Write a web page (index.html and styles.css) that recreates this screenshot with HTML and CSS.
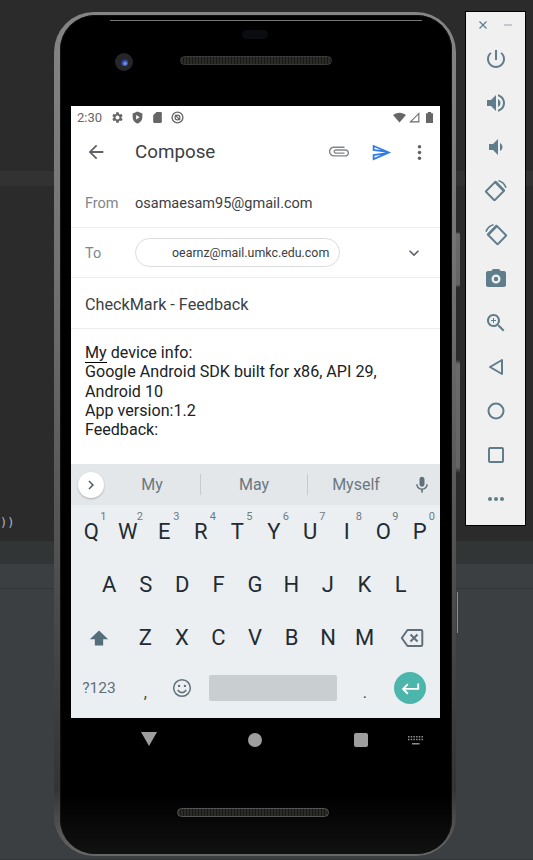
FILE: index.html
```html
<!DOCTYPE html>
<html lang="en">

<head>
  <meta charset="UTF-8" />
  <meta name="viewport" content="width=device-width, initial-scale=1.0" />
  <title>Compose - Emulator</title>
  <link rel="stylesheet" href="styles.css">
</head>

<body>
  <div class="desktop">
    <div class="ide-top">
      <div class="ide-band"></div>
      <div class="ide-code">))</div>
    </div>
    <div class="ide-tabs"></div>
    <div class="ide-toolbar"></div>
    <div class="ide-bottom"></div>

    <div class="side-button side-button-power"></div>
    <div class="side-button side-button-volume"></div>
    <div class="side-tick"></div>

    <div class="phone">
      <div class="phone-inner">
        <div class="bezel-top">
          <div class="highlight"></div>
          <div class="sensor"></div>
          <div class="camera"><div class="lens"></div></div>
          <div class="speaker speaker-top"></div>
        </div>

        <div class="screen">
          <div class="status">
            <span class="time">2:30</span>
            <svg class="st" viewBox="0 0 24 24"><path d="M19.14 12.94c.04-.3.06-.61.06-.94 0-.32-.02-.64-.07-.94l2.03-1.58c.18-.14.23-.41.12-.61l-1.92-3.32c-.12-.22-.37-.29-.59-.22l-2.39.96c-.5-.38-1.03-.7-1.62-.94l-.36-2.54c-.04-.24-.24-.41-.48-.41h-3.84c-.24 0-.43.17-.47.41l-.36 2.54c-.59.24-1.13.57-1.62.94l-2.39-.96c-.22-.08-.47 0-.59.22L2.74 8.87c-.12.21-.08.47.12.61l2.03 1.58c-.05.3-.09.63-.09.94s.02.64.07.94l-2.03 1.58c-.18.14-.23.41-.12.61l1.92 3.32c.12.22.37.29.59.22l2.39-.96c.5.38 1.03.7 1.62.94l.36 2.54c.05.24.24.41.48.41h3.84c.24 0 .44-.17.47-.41l.36-2.54c.59-.24 1.13-.56 1.62-.94l2.39.96c.22.08.47 0 .59-.22l1.92-3.32c.12-.22.07-.47-.12-.61l-2.01-1.58zM12 15.6c-1.98 0-3.6-1.62-3.6-3.6s1.62-3.6 3.6-3.6 3.6 1.62 3.6 3.6-1.62 3.6-3.6 3.6z"/></svg>
            <svg class="st" viewBox="0 0 24 24"><path fill-rule="evenodd" d="M12 1L3 4.5V11c0 5.5 3.8 10.7 9 12 5.200-1.300 9-6.500 9-12V4.500L12 1zM9.500 7.500v8l6.500-4-6.500-4z"/></svg>
            <svg class="st" viewBox="0 0 24 24"><path d="M18 2h-8L4 8v12c0 1.100.9 2 2 2h12c1.100 0 2-.9 2-2V4c0-1.100-.9-2-2-2z"/></svg>
            <svg class="st" viewBox="0 0 24 24"><circle cx="12" cy="12" r="10" fill="none" stroke="#666" stroke-width="2.400"/><circle cx="12" cy="12" r="4.500" fill="none" stroke="#666" stroke-width="2.200"/><path fill="none" stroke="#666" stroke-width="2.200" d="M7.500 7l9.500 10"/></svg>
            <span class="status-space"></span>
            <svg class="st" viewBox="0 0 24 24"><path d="M12 21L0 7.500C3.200 4.700 7.400 3 12 3s8.800 1.700 12 4.500L12 21z"/></svg>
            <svg class="st st-signal" viewBox="0 0 24 24"><path fill="none" stroke="#666" stroke-width="2" d="M20 4.500V20H4.500L20 4.500z"/></svg>
            <svg class="st" viewBox="0 0 24 24"><path d="M9 2h6v2h2.500c.6 0 1 .4 1 1v16c0 .6-.4 1-1 1h-11c-.6 0-1-.4-1-1V5c0-.6.4-1 1-1H9V2z"/></svg>
          </div>

          <div class="toolbar">
            <svg class="back" viewBox="0 0 24 24"><path d="M20 11H7.830l5.590-5.590L12 4l-8 8 8 8 1.410-1.410L7.830 13H20v-2z"/></svg>
            <span class="title">Compose</span>
            <svg class="attach" viewBox="0 0 24 24"><path d="M18 7.500H6.500c-2.210 0-4 1.790-4 4s1.790 4 4 4H19c1.380 0 2.500-1.120 2.500-2.500s-1.120-2.500-2.500-2.500H8.500c-.55 0-1 .45-1 1s.45 1 1 1H18V14H8.500C7.120 14 6 12.880 6 11.500S7.120 9 8.500 9H19c2.210 0 4 1.790 4 4s-1.790 4-4 4H6.500C3.460 17 1 14.540 1 11.500S3.460 6 6.500 6H18v1.500z"/></svg>
            <svg class="send" viewBox="0 0 24 24"><path d="M4.010 6.030l7.510 3.220-7.520-1 .01-2.220m7.500 8.720L4 17.970v-2.220l7.510-1M2.010 3L2 10l15 2-15 2 .01 7L23 12 2.010 3z"/></svg>
            <svg class="more" viewBox="0 0 24 24"><circle cx="12" cy="5.500" r="2"/><circle cx="12" cy="12" r="2"/><circle cx="12" cy="18.500" r="2"/></svg>
          </div>

          <div class="row row-from">
            <span class="label">From</span>
            <span class="value">osamaesam95@gmail.com</span>
          </div>
          <div class="row row-to">
            <span class="label">To</span>
            <span class="chip">oearnz@mail.umkc.edu.com</span>
            <svg class="expand" viewBox="0 0 24 24"><path d="M16.590 8.590L12 13.170 7.410 8.590 6 10l6 6 6-6-1.410-1.410z"/></svg>
          </div>
          <div class="row row-subject">CheckMark - Feedback</div>

          <div class="body-text">
            <div><span class="misspelt">My</span> device info:</div>
            <div>Google Android SDK built for x86, API 29,</div>
            <div>Android 10</div>
            <div>App version:1.2</div>
            <div>Feedback:</div>
          </div>

          <div class="suggest">
            <div class="suggest-open"><svg viewBox="0 0 24 24"><path d="M8.590 16.590L13.170 12 8.590 7.410 10 6l6 6-6 6-1.410-1.410z"/></svg></div>
            <span class="word">My</span>
            <span class="word word-mid">May</span>
            <span class="word word-last">Myself</span>
            <svg class="mic" viewBox="0 0 24 24"><path d="M12 14c1.660 0 2.990-1.340 2.990-3L15 5c0-1.660-1.340-3-3-3S9 3.340 9 5v6c0 1.660 1.340 3 3 3zm5.300-3c0 3-2.540 5.100-5.300 5.100S6.700 14 6.700 11H5c0 3.410 2.720 6.230 6 6.720V21h2v-3.280c3.280-.48 6-3.300 6-6.720h-1.700z"/></svg>
          </div>

          <div class="keyboard">
            <div class="keys keys-top">
              <div class="key">Q<sup>1</sup></div>
              <div class="key">W<sup>2</sup></div>
              <div class="key">E<sup>3</sup></div>
              <div class="key">R<sup>4</sup></div>
              <div class="key">T<sup>5</sup></div>
              <div class="key">Y<sup>6</sup></div>
              <div class="key">U<sup>7</sup></div>
              <div class="key">I<sup>8</sup></div>
              <div class="key">O<sup>9</sup></div>
              <div class="key">P<sup>0</sup></div>
            </div>
            <div class="keys keys-mid">
              <div class="key">A</div>
              <div class="key">S</div>
              <div class="key">D</div>
              <div class="key">F</div>
              <div class="key">G</div>
              <div class="key">H</div>
              <div class="key">J</div>
              <div class="key">K</div>
              <div class="key">L</div>
            </div>
            <div class="keys keys-low">
              <div class="key"><svg class="shift" viewBox="0 0 24 24"><path d="M12 3L1 13.500h6V21h10v-7.500h6L12 3z"/></svg></div>
              <div class="key">Z</div>
              <div class="key">X</div>
              <div class="key">C</div>
              <div class="key">V</div>
              <div class="key">B</div>
              <div class="key">N</div>
              <div class="key">M</div>
              <div class="key"><svg class="backspace" viewBox="0 0 24 24"><path fill="none" stroke="#5f707a" stroke-width="2" stroke-linejoin="round" d="M7.500 4H21c.8 0 1.300.5 1.300 1.300v13.400c0 .8-.5 1.300-1.300 1.300H7.500L1.800 12l5.700-8z"/><path fill="none" stroke="#5f707a" stroke-width="2" d="M10.500 8.500l7 7M17.500 8.500l-7 7"/></svg></div>
            </div>
            <div class="keys keys-bottom">
              <div class="key key-small">?123</div>
              <div class="key key-small key-comma">,</div>
              <div class="key"><svg class="smile" viewBox="0 0 24 24"><circle cx="12" cy="12" r="10" fill="none" stroke="#5f707a" stroke-width="1.800"/><circle cx="8.500" cy="9.500" r="1.400" fill="#5f707a"/><circle cx="15.500" cy="9.500" r="1.400" fill="#5f707a"/><path fill="none" stroke="#5f707a" stroke-width="1.800" d="M7 14.200c1 2 2.800 3.200 5 3.200s4-1.200 5-3.200"/></svg></div>
              <div class="key"><div class="space"></div></div>
              <div class="key key-small key-period">.</div>
              <div class="key">
                <div class="enter"><svg viewBox="0 0 24 24"><path d="M20 7v5H6.830l3.580-3.590L9 7l-6 6 6 6 1.410-1.410L6.830 14H22V7h-2z"/></svg></div>
              </div>
            </div>
          </div>
        </div>

        <div class="bezel-bottom">
          <div class="nav">
            <svg class="nav-back" viewBox="0 0 16 14"><path d="M0 0h16L8 14z"/></svg>
            <div class="nav-home"></div>
            <div class="nav-recent"></div>
            <svg class="nav-kb" viewBox="0 0 15 9"><path d="M0 0h1.500v1.500H0zM2.700 0h1.500v1.500H2.700zM5.400 0h1.500v1.500H5.400zM8.100 0h1.500v1.500H8.100zM10.800 0h1.500v1.500h-1.500zM13.500 0H15v1.500h-1.500zM0 2.700h1.500v1.500H0zM2.700 2.700h1.500v1.500H2.700zM5.400 2.700h1.500v1.500H5.400zM8.100 2.700h1.500v1.500H8.100zM10.800 2.700h1.500v1.500h-1.500zM13.500 2.700H15v1.500h-1.500zM4 7h7.500v1.400H4z"/></svg>
          </div>
          <div class="speaker speaker-bottom"></div>
        </div>
      </div>
    </div>

    <div class="panel">
      <div class="panel-top">
        <svg viewBox="0 0 10 10"><path d="M1.500 1.500l7 7M8.500 1.500l-7 7"/></svg>
        <svg viewBox="0 0 10 10"><path d="M1 5h8"/></svg>
      </div>
      <div class="tool"><svg viewBox="0 0 24 24"><path d="M13 3h-2v10h2V3zm4.830 2.170l-1.420 1.420C17.990 7.860 19 9.810 19 12c0 3.870-3.130 7-7 7s-7-3.130-7-7c0-2.190 1.010-4.140 2.580-5.420L6.170 5.170C4.230 6.820 3 9.260 3 12c0 4.970 4.030 9 9 9s9-4.030 9-9c0-2.740-1.230-5.180-3.170-6.830z"/></svg></div>
      <div class="tool"><svg viewBox="0 0 24 24"><path d="M3 9v6h4l5 5V4L7 9H3zm13.500 3c0-1.770-1.020-3.290-2.500-4.030v8.050c1.480-.73 2.500-2.250 2.500-4.020zM14 3.230v2.060c2.890.86 5 3.540 5 6.710s-2.110 5.850-5 6.710v2.060c4.010-.91 7-4.490 7-8.770s-2.990-7.860-7-8.770z"/></svg></div>
      <div class="tool"><svg viewBox="0 0 24 24"><path d="M5 9v6h4l5 5V4L9 9H5zm13.500 3c0-1.770-1.020-3.290-2.500-4.030v8.050c1.480-.73 2.500-2.250 2.500-4.020z"/></svg></div>
      <div class="tool"><svg viewBox="0 0 24 24"><path d="M10.500 2.300L1.300 11.500c-.6.600-.6 1.500 0 2.100l8.100 8.100c.6.600 1.500.6 2.100 0l9.200-9.200c.6-.6.600-1.500 0-2.100l-8.100-8.100c-.6-.6-1.500-.6-2.100 0zm.5 2.300l7.400 7.400-7.900 7.900-7.400-7.400 7.900-7.900zM14.500 1c3.900.8 7 3.700 8.200 7.500l-1.500.4c-1-3.200-3.600-5.700-6.900-6.400L14.500 1z"/></svg></div>
      <div class="tool"><svg viewBox="0 0 24 24"><path d="M13.500 2.300l9.200 9.200c.6.600.6 1.500 0 2.100l-8.100 8.100c-.6.600-1.500.6-2.100 0l-9.200-9.200c-.6-.6-.6-1.500 0-2.100l8.100-8.100c.6-.6 1.500-.6 2.100 0zm-.5 2.300L5.600 12l7.900 7.900 7.400-7.400L13 4.600zM9.500 1C5.600 1.800 2.500 4.700 1.300 8.500l1.500.4c1-3.200 3.600-5.700 6.900-6.400L9.500 1z"/></svg></div>
      <div class="tool"><svg viewBox="0 0 24 24"><path fill-rule="evenodd" d="M9 2L7.170 4H4c-1.100 0-2 .9-2 2v12c0 1.100.9 2 2 2h16c1.100 0 2-.9 2-2V6c0-1.100-.9-2-2-2h-3.170L15 2H9zm3 14.500a4.500 4.500 0 1 1 0-9 4.500 4.500 0 0 1 0 9zm0-2.300a2.200 2.200 0 1 0 0-4.400 2.200 2.200 0 0 0 0 4.400z"/></svg></div>
      <div class="tool"><svg viewBox="0 0 24 24"><path d="M15.500 14h-.79l-.28-.27C15.410 12.590 16 11.110 16 9.500 16 5.910 13.090 3 9.500 3S3 5.910 3 9.500 5.910 16 9.500 16c1.610 0 3.090-.59 4.230-1.570l.27.28v.79l5 4.990L20.490 19l-4.990-5zm-6 0C7.010 14 5 11.990 5 9.500S7.010 5 9.500 5 14 7.010 14 9.500 11.990 14 9.500 14z"/><path d="M9 7h1v2h2v1h-2v2H9v-2H7V9h2z"/></svg></div>
      <div class="tool"><svg viewBox="0 0 24 24"><path fill="none" stroke="#607d8b" stroke-width="2" stroke-linejoin="round" d="M18 5v14L6 12z"/></svg></div>
      <div class="tool"><svg viewBox="0 0 24 24"><circle cx="12" cy="12" r="7.500" fill="none" stroke="#607d8b" stroke-width="2"/></svg></div>
      <div class="tool"><svg viewBox="0 0 24 24"><rect x="5" y="5" width="14" height="14" rx="1" fill="none" stroke="#607d8b" stroke-width="2"/></svg></div>
      <div class="tool"><svg viewBox="0 0 24 24"><circle cx="6" cy="12" r="2"/><circle cx="12" cy="12" r="2"/><circle cx="18" cy="12" r="2"/></svg></div>
    </div>
  </div>
</body>

</html>
```

FILE: styles.css
```css
* {
  box-sizing: border-box;
}

html,
body {
  margin: 0;
  padding: 0;
}

body {
  font-family: Roboto, "Liberation Sans", sans-serif;
}

.desktop {
  position: relative;
  width: 533px;
  height: 860px;
  overflow: hidden;
  display: flex;
  flex-direction: column;
  background-color: #2b2b2b;
}

/* ide behind the emulator */
.ide-top {
  height: 541px;
  padding-top: 171px;
  background-color: #2b2b2b;
  display: flex;
  flex-direction: column;
}

.ide-band {
  height: 15px;
  background-color: #323232;
}

.ide-code {
  margin-top: 329px;
  font-family: "DejaVu Sans Mono", monospace;
  font-size: 12px;
  line-height: 16px;
  color: #a9b7c6;
}

.ide-tabs {
  height: 23px;
  background-color: #313535;
}

.ide-toolbar {
  height: 25px;
  background-color: #3c3f41;
  border-bottom: 1px solid #333637;
}

.ide-bottom {
  flex: 1;
  background-color: #3c3f41;
  border-bottom: 1px solid #333637;
}

/* phone */
.side-button {
  position: absolute;
  left: 456px;
  width: 4px;
  background: linear-gradient(180deg, #333 0, #6a6a6a 4%, #646464 94%, #222 100%);
  border-radius: 0 2px 2px 0;
}

.side-button-power {
  top: 232px;
  height: 56px;
}

.side-button-volume {
  top: 360px;
  height: 114px;
}

.side-tick {
  position: absolute;
  left: 457px;
  top: 592px;
  width: 1px;
  height: 41px;
  background-color: #8a8d8e;
}

.phone {
  position: absolute;
  left: 54px;
  top: 12px;
  width: 402px;
  height: 844px;
  padding: 3px 4px 2px 6px;
  border-radius: 40px;
  background: linear-gradient(180deg, #858585 0%, #727272 30%, #505050 65%, #343434 92%, #686868 100%);
}

.phone-inner {
  height: 100%;
  border-radius: 35px;
  display: flex;
  flex-direction: column;
  align-items: center;
  background: linear-gradient(180deg, #000 0%, #000 93%, #111 100%);
  box-shadow: inset 0 0 0 1px #111;
}

.bezel-top {
  position: relative;
  width: 100%;
  height: 91px;
}

.highlight {
  position: absolute;
  left: 50px;
  right: 30px;
  top: 5px;
  height: 1px;
  background-color: #777;
}

.sensor {
  position: absolute;
  left: 182px;
  top: 15px;
  width: 26px;
  height: 9px;
  border-radius: 5px;
  background-color: #0a0c10;
}

.camera {
  position: absolute;
  left: 55px;
  top: 38px;
  width: 18px;
  height: 18px;
  border-radius: 50%;
  background-color: #24262a;
  display: flex;
  align-items: center;
  justify-content: center;
}

.lens {
  width: 7px;
  height: 7px;
  border-radius: 50%;
  background: radial-gradient(circle at 60% 65%, #8aa8f0 0, #3349a8 45%, #10162c 100%);
}

.speaker {
  width: 152px;
  height: 9px;
  border-radius: 5px;
  border: 1px solid #3a3a3a;
  background: repeating-linear-gradient(90deg, #2b2b27 0, #2b2b27 2px, #171715 2px, #171715 3px);
}

.speaker-top {
  position: absolute;
  left: 120px;
  top: 41px;
}

.bezel-bottom {
  flex: 1;
  width: 100%;
  display: flex;
  flex-direction: column;
  align-items: center;
}

.speaker-bottom {
  margin-top: 19px;
  margin-right: 6px;
  border-color: #555;
}

.nav {
  position: relative;
  width: 369px;
  height: 71px;
  margin-right: 1px;
}

.nav-back {
  position: absolute;
  left: 70px;
  top: 14px;
  width: 16px;
  height: 14px;
  fill: #9e9e9e;
}

.nav-home {
  position: absolute;
  left: 177px;
  top: 15px;
  width: 14px;
  height: 14px;
  border-radius: 50%;
  background-color: #9e9e9e;
}

.nav-recent {
  position: absolute;
  left: 283px;
  top: 15px;
  width: 14px;
  height: 14px;
  border-radius: 2px;
  background-color: #9e9e9e;
}

.nav-kb {
  position: absolute;
  left: 337px;
  top: 18px;
  width: 15px;
  height: 9px;
  fill: #8f8f8f;
}

/* screen */
.screen {
  width: 369px;
  height: 612px;
  margin-right: 1px;
  background-color: #fff;
  display: flex;
  flex-direction: column;
  color: #3c4043;
}

.status {
  height: 22px;
  padding: 0 4px 0 6px;
  display: flex;
  align-items: center;
  gap: 7px;
  font-size: 13px;
  color: #666;
}

.time {
  margin-right: 2px;
}

.st {
  width: 13px;
  height: 13px;
  fill: #666;
}

.st-signal {
  margin: 0 -5px;
}

.status-space {
  flex: 1;
}

.toolbar {
  height: 48px;
  display: flex;
  align-items: center;
}

.back {
  width: 22px;
  height: 22px;
  margin-left: 14px;
  fill: #5f6368;
}

.title {
  margin-left: 28px;
  font-size: 18.800px;
  color: #3c4043;
}

.attach {
  width: 22px;
  height: 22px;
  margin-left: auto;
  fill: #80868b;
}

.send {
  width: 21px;
  height: 21px;
  margin-left: 21px;
  fill: #2f7be8;
}

.more {
  width: 21px;
  height: 21px;
  margin-left: 17px;
  margin-right: 10px;
  fill: #5f6368;
}

.row {
  display: flex;
  align-items: center;
  padding-left: 14px;
  border-bottom: 1px solid #eceded;
}

.row-from {
  height: 52px;
  padding-top: 4px;
}

.row-to {
  height: 50px;
}

.row-to .label {
  padding-top: 2px;
}

.row-subject {
  height: 51px;
  padding-top: 2px;
  font-size: 16.200px;
  color: #3c4043;
}

.label {
  width: 50px;
  font-size: 14.500px;
  color: #80868b;
}

.value {
  font-size: 14.500px;
  color: #3c4043;
}

.chip {
  width: 205px;
  height: 29px;
  padding-left: 36px;
  display: flex;
  align-items: center;
  border: 1px solid #dadce0;
  border-radius: 15px;
  font-size: 12.400px;
  color: #3c4043;
  white-space: nowrap;
}

.expand {
  width: 20px;
  height: 20px;
  margin-left: auto;
  margin-right: 16px;
  fill: #5f6368;
}

.body-text {
  flex: 1;
  padding: 14px 14px 0;
  font-size: 16.100px;
  line-height: 19.300px;
  color: #202124;
}

.misspelt {
  border-bottom: 1px solid #000;
}

/* keyboard */
.suggest {
  height: 41px;
  display: flex;
  align-items: center;
  background-color: #e4e7ea;
}

.suggest-open {
  width: 26px;
  height: 26px;
  margin-left: 7px;
  border-radius: 50%;
  background-color: #fff;
  box-shadow: 0 1px 2px rgba(0, 0, 0, 0.25);
  display: flex;
  align-items: center;
  justify-content: center;
}

.suggest-open svg {
  width: 18px;
  height: 18px;
  fill: #4f5f68;
}

.word {
  width: 96px;
  height: 21px;
  line-height: 21px;
  font-size: 16px;
  text-align: center;
  color: #6b7880;
}

.word-mid {
  width: 108px;
  border-left: 1px solid #c6cbcf;
  border-right: 1px solid #c6cbcf;
}

.mic {
  width: 20px;
  height: 20px;
  margin-left: 8px;
  fill: #5f707a;
}

.keyboard {
  flex: 1;
  background-color: #eceff1;
  display: flex;
  flex-direction: column;
}

.keys {
  height: 53px;
  display: grid;
}

.keys-top {
  grid-template-columns: repeat(10, 1fr);
  padding: 0 2px 0 2px;
}

.keys-mid {
  grid-template-columns: repeat(9, 1fr);
  padding: 0 21px 0 20px;
}

.keys-low {
  grid-template-columns: 56px repeat(7, 1fr) 57px;
}

.keys-bottom {
  height: 54px;
  padding-bottom: 6px;
  grid-template-columns: 56px 36.500px 36.500px 1fr 36.500px 57px;
}

.key {
  position: relative;
  display: flex;
  align-items: center;
  justify-content: center;
  font-size: 22px;
  color: #1f2c34;
}

.key sup {
  position: absolute;
  top: 6px;
  right: 3px;
  font-size: 11px;
  line-height: 12px;
  color: #6f7b82;
}

.key-small {
  font-size: 15.500px;
  color: #5f707a;
}

.key-comma,
.key-period {
  padding-top: 8px;
  font-size: 16px;
  color: #37474f;
}

.shift {
  width: 20px;
  height: 20px;
  fill: #546e7a;
}

.backspace {
  width: 24px;
  height: 24px;
}

.smile {
  width: 20px;
  height: 20px;
}

.space {
  width: 128px;
  height: 26px;
  border-radius: 2px;
  background-color: #c9ced1;
}

.enter {
  width: 32px;
  height: 32px;
  margin-right: 3px;
  border-radius: 50%;
  background-color: #4db6ac;
  display: flex;
  align-items: center;
  justify-content: center;
}

.enter svg {
  width: 22px;
  height: 22px;
  fill: #fff;
}

/* emulator tool panel */
.panel {
  position: absolute;
  left: 465px;
  top: 11px;
  width: 61px;
  height: 515px;
  background-color: #f0f0f0;
  border: 1px solid #000;
  display: flex;
  flex-direction: column;
  align-items: center;
}

.panel-top {
  width: 100%;
  height: 25px;
  padding: 0 12px;
  display: flex;
  align-items: center;
  justify-content: space-between;
}

.panel-top svg {
  width: 10px;
  height: 10px;
  fill: none;
  stroke: #607d8b;
  stroke-width: 1.200;
}

.panel-top svg:last-child {
  stroke: #9fb1ba;
}

.tool {
  width: 44px;
  height: 44px;
  flex-shrink: 0;
  display: flex;
  align-items: center;
  justify-content: center;
}

.tool svg {
  width: 24px;
  height: 24px;
  fill: #607d8b;
}
```
